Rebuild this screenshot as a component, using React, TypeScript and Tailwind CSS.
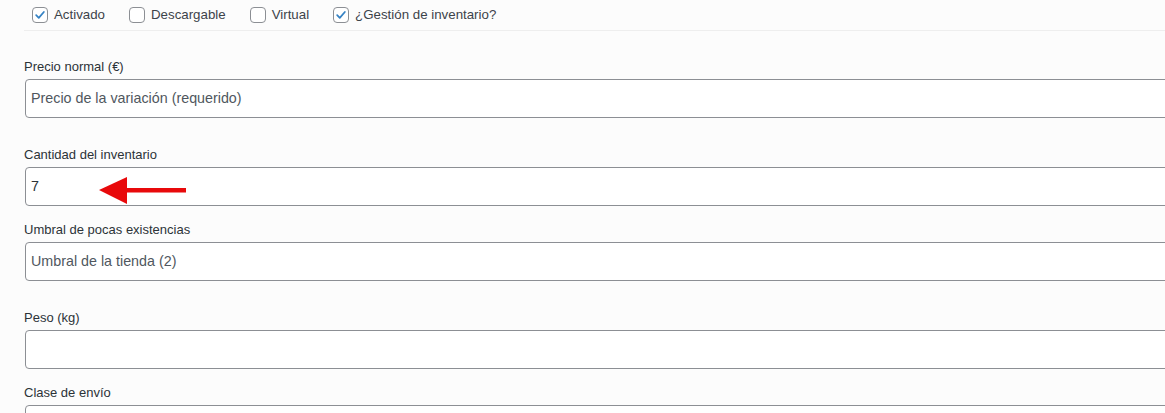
import React from "react";

const OPTIONS = [
  { label: "Activado", checked: true },
  { label: "Descargable", checked: false },
  { label: "Virtual", checked: false },
  { label: "¿Gestión de inventario?", checked: true },
];

const FIELDS = [
  { label: "Precio normal (€)", value: "", placeholder: "Precio de la variación (requerido)", gap: "mt-[27px]" },
  { label: "Cantidad del inventario", value: "7", placeholder: "", gap: "mt-[28px]", arrow: true },
  { label: "Umbral de pocas existencias", value: "", placeholder: "Umbral de la tienda (2)", gap: "mt-[15px]" },
  { label: "Peso (kg)", value: "", placeholder: "", gap: "mt-[28px]" },
  { label: "Clase de envío", value: "", placeholder: "", gap: "mt-[15px]" },
];

function Checkbox({ checked }: { checked: boolean }) {
  return (
    <span className="w-4 h-4 shrink-0 rounded-[4px] border border-[#8c8f94] bg-white flex items-center justify-center">
      {checked && (
        <svg viewBox="0 0 16 16" className="w-[14px] h-[14px]">
          <path d="M3.6 8.2 6.6 11.2 12.4 4.6" fill="none" stroke="#3582c4" strokeWidth="2" strokeLinecap="round" strokeLinejoin="round" />
        </svg>
      )}
    </span>
  );
}

export default function App() {
  return (
    <div
      className="w-[1165px] h-[413px] overflow-hidden bg-[#fcfcfc] text-[#3c434a]"
      style={{ fontFamily: '"Liberation Sans", Arial, sans-serif' }}
    >
      {/* options row */}
      <div className="ml-[24px] border-b border-[#eeeeee] h-[31px] flex items-center gap-[24px] pl-[8px] text-[13.3px]">
        {OPTIONS.map((o) => (
          <label key={o.label} className="flex items-center gap-[6px]">
            <Checkbox checked={o.checked} />
            <span>{o.label}</span>
          </label>
        ))}
      </div>

      <div className="pl-[24px] flex flex-col">
        {FIELDS.map((f) => (
          <div key={f.label} className={f.gap}>
            <div className="text-[13px] leading-[18px] mb-[3px] text-[#2c3338]">{f.label}</div>
            <div className="relative ml-px w-[1170px] h-[39px] rounded-[4px] border border-[#8c8f94] bg-white flex items-center px-[5px] text-[14.3px] text-[#2c3338]">
              {f.value ? (
                <span>{f.value}</span>
              ) : (
                <span className="text-[#50575e]">{f.placeholder}</span>
              )}
              {f.arrow && (
                <svg className="absolute left-[73px] top-[9px] w-[89px] h-[28px]" viewBox="0 0 89 28">
                  <polygon points="0,13 28,0 28,27" fill="#e8090b" />
                  <rect x="26" y="11" width="61" height="4.5" fill="#e8090b" />
                </svg>
              )}
            </div>
          </div>
        ))}
      </div>
    </div>
  );
}
